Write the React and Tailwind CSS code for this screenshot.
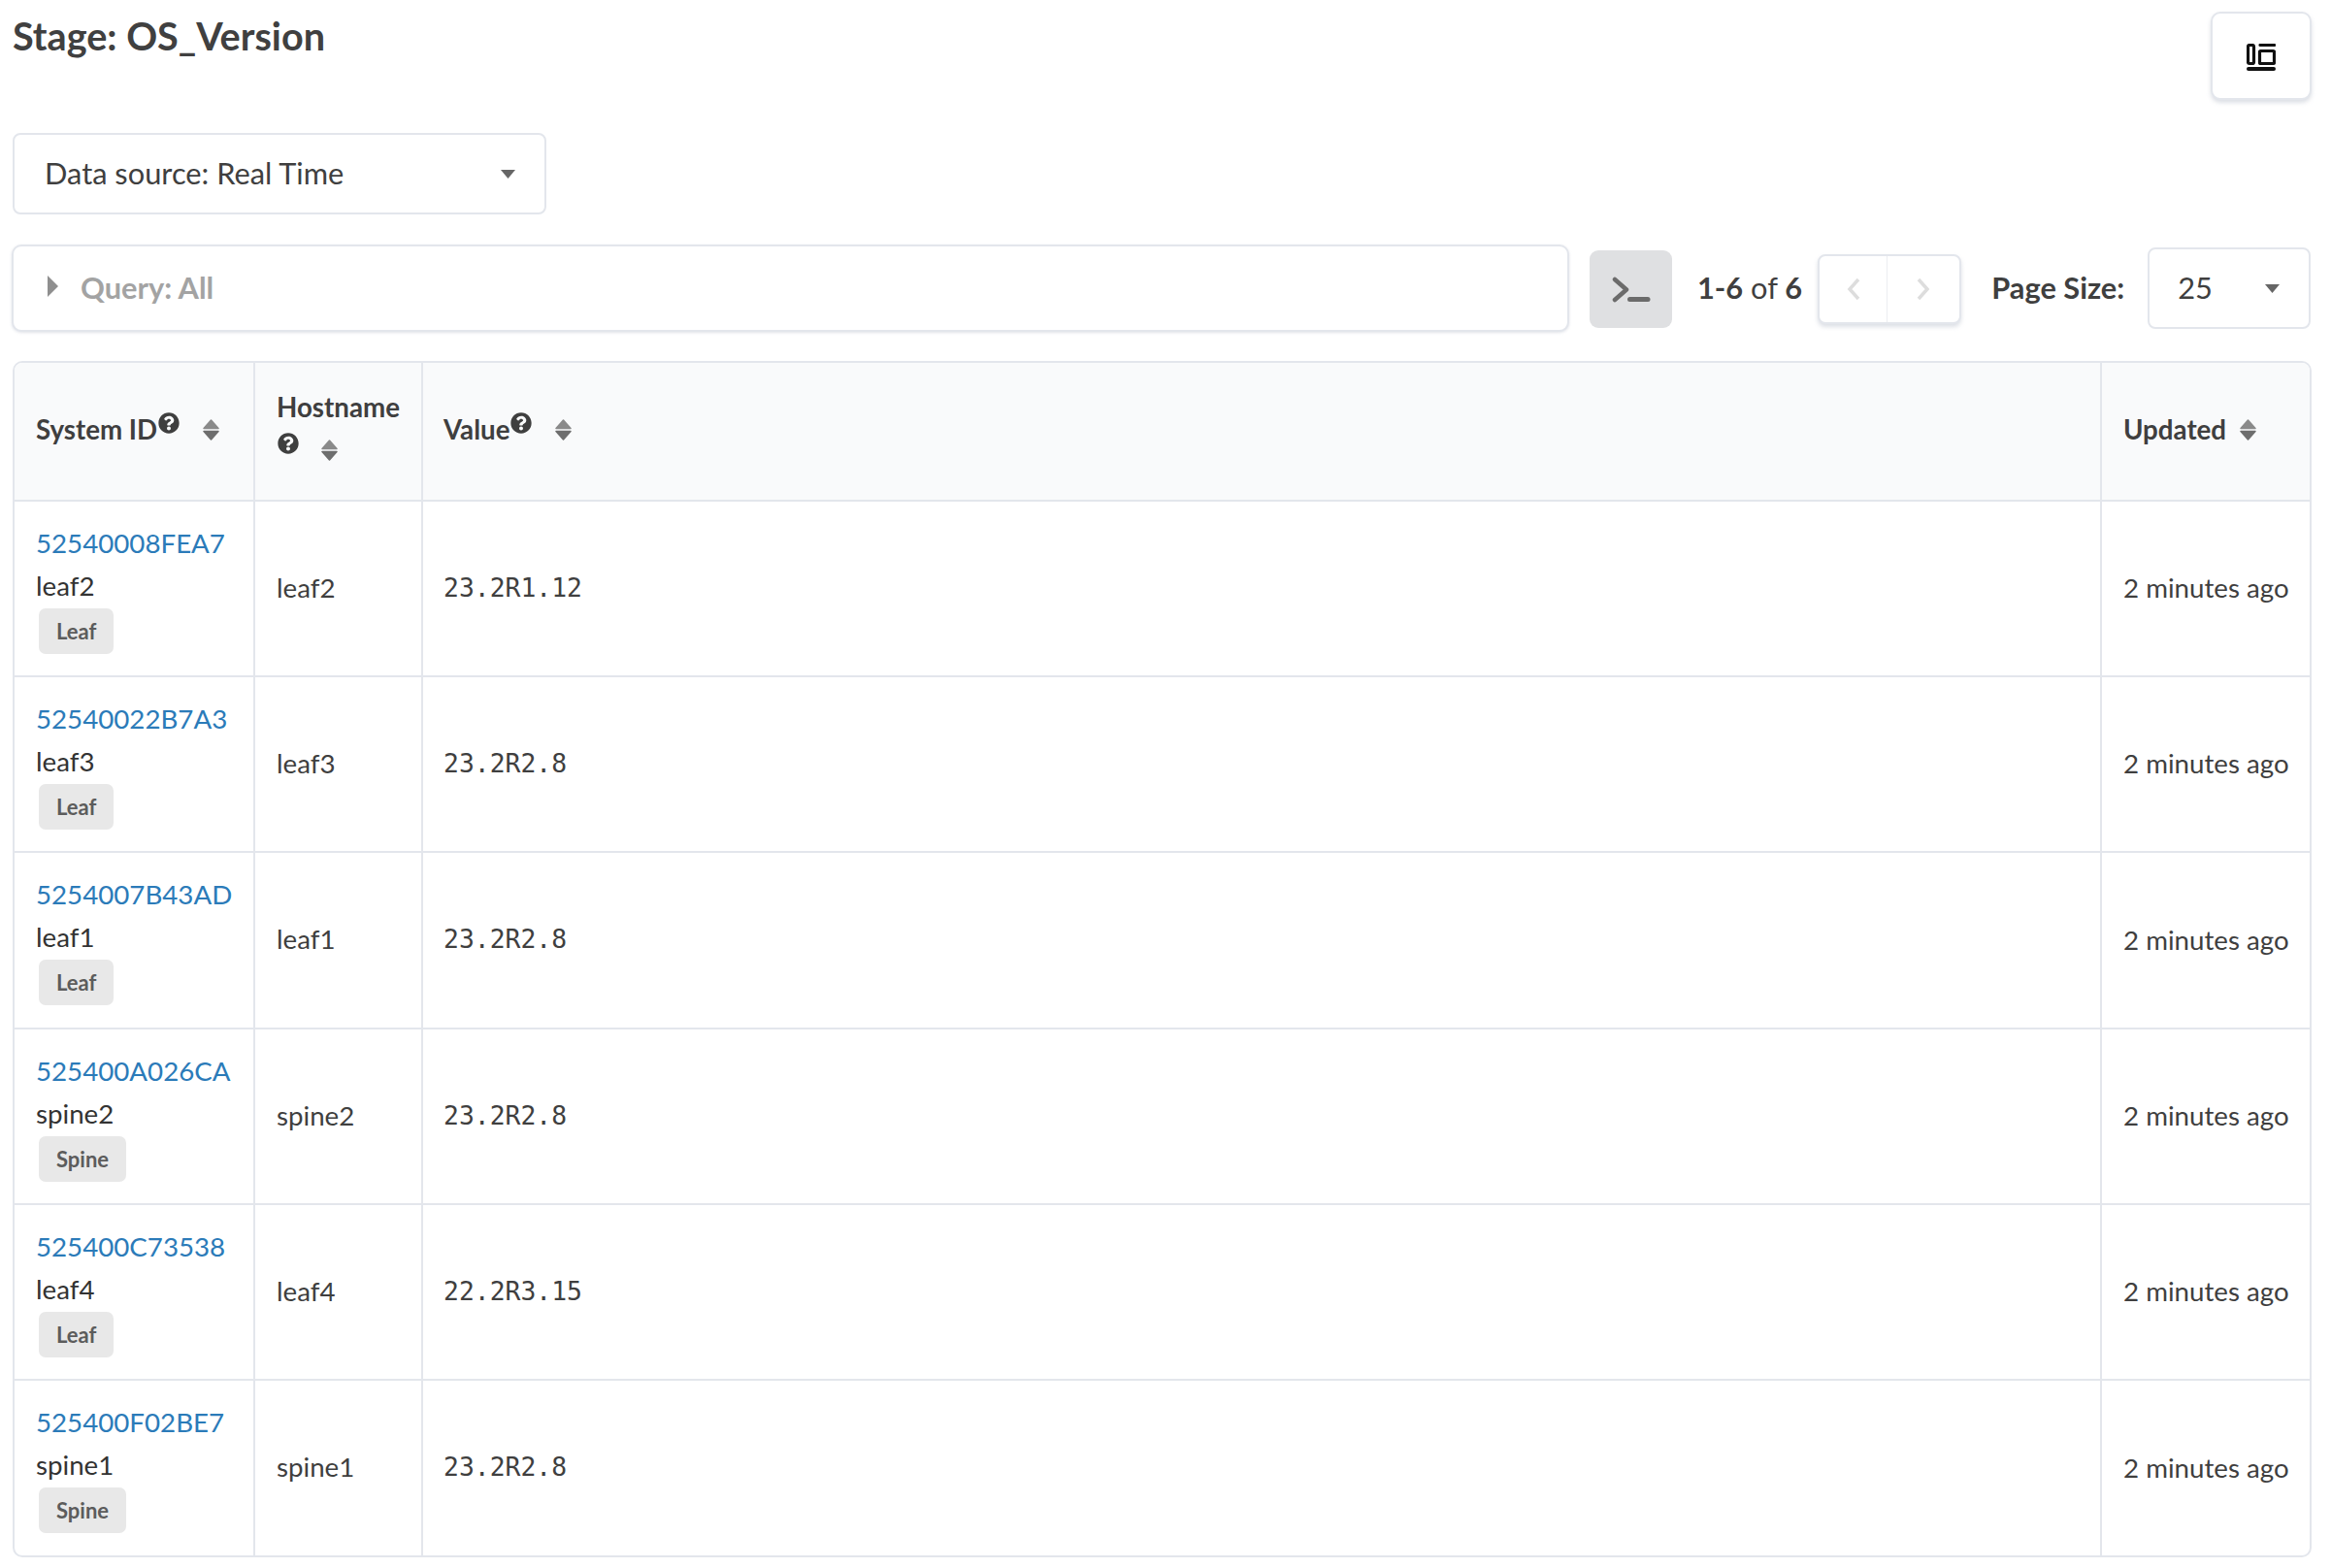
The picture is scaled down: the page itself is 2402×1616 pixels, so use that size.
import React from "react";
import { FaQuestionCircle } from "react-icons/fa";

const Sort = () => (
  <svg width="17" height="22" viewBox="0 0 17 22" className="shrink-0 block">
    <path d="M8.5 1 L16 9.5 H1 Z" fill="#8a8a8a" stroke="#8a8a8a" strokeWidth="1.5" strokeLinejoin="round" />
    <path d="M1 12.5 H16 L8.5 21 Z" fill="#6e6e6e" stroke="#6e6e6e" strokeWidth="1.5" strokeLinejoin="round" />
  </svg>
);

const Help = ({ className }) => <FaQuestionCircle className={className} size={22} color="#3f3f3f" />;

const Caret = ({ className }) => (
  <svg width="15" height="9" viewBox="0 0 15 9" className={className}>
    <path d="M0 0 H15 L7.5 9 Z" fill="#666666" />
  </svg>
);

const rows = [
  ["52540008FEA7", "leaf2", "Leaf", "23.2R1.12", "h-[181px]"],
  ["52540022B7A3", "leaf3", "Leaf", "23.2R2.8", "h-[181px]"],
  ["5254007B43AD", "leaf1", "Leaf", "23.2R2.8", "h-[182px]"],
  ["525400A026CA", "spine2", "Spine", "23.2R2.8", "h-[181px]"],
  ["525400C73538", "leaf4", "Leaf", "22.2R3.15", "h-[181px]"],
  ["525400F02BE7", "spine1", "Spine", "23.2R2.8", "h-[181px]"],
];

const box = "border-2 border-[#e3e6ec] bg-white";

export default function App() {
  return (
    <div className="w-[2402px] h-[1616px] bg-white text-[#3f3f3f] text-[30.8px] leading-[42px] pl-[12px] pr-[20px] font-['Lato','sans-serif'] overflow-hidden">
      <div className="flex justify-between items-start h-[102px] pt-[12px]">
        <h1 className="pl-[1px] -mt-[12px] pt-[12px] text-[39.6px] leading-[50px] font-bold text-[#404040]">Stage: OS_Version</h1>
        <button className={`${box} w-[104px] h-[91px] rounded-[10px] shadow-[0_3px_4px_rgba(180,186,200,0.45)] flex items-center justify-center`}>
          <svg width="30" height="28" viewBox="0 0 30 28" fill="none" stroke="#111" strokeWidth="3.2" className="mt-[3px]">
            <rect x="1.5" y="1.5" width="6" height="19" rx="1.5" />
            <path d="M14 1.5 H28.5" strokeLinecap="round" />
            <rect x="13.5" y="7.5" width="15" height="13" rx="1" />
            <path d="M2 26 H28" strokeWidth="4" strokeLinecap="round" />
          </svg>
        </button>
      </div>

      <div className={`${box} ml-[1px] mt-[35px] w-[550px] h-[84px] rounded-[8px] flex items-center justify-between pl-[31px] pr-[30px]`}>
        <span>Data source: Real Time</span>
        <Caret />
      </div>

      <div className="flex items-center mt-[31px] h-[90px]">
        <div className={`${box} w-[1605px] h-[90px] rounded-[10px] flex items-center pl-[35px] shadow-[0_1px_3px_rgba(180,186,200,0.4)] shrink-0`}>
          <svg width="11" height="22" viewBox="0 0 11 22" className="mr-[23px] -mt-[4px]"><path d="M0 0 L11 11 L0 22 Z" fill="#8f8f8f" /></svg>
          <span className="font-bold text-[#a3a3a3]">Query: All</span>
        </div>
        <button className="ml-[21px] mt-[2px] w-[85px] h-[80px] rounded-[9px] bg-[#dfe0e2] flex items-center justify-center shrink-0">
          <svg width="40" height="27" viewBox="0 0 40 27" fill="none" stroke="#6b6b6b" strokeLinecap="round" strokeLinejoin="round" className="mt-[1px]">
            <path d="M3 3 L15 13.5 L3 24" strokeWidth="4.5" />
            <path d="M18.5 23.5 H37" strokeWidth="5" />
          </svg>
        </button>
        <span className="ml-[26px] whitespace-nowrap"><b>1-6</b> of <b>6</b></span>
        <div className={`${box} ml-[16px] mt-[2px] w-[148px] h-[72px] rounded-[8px] flex shadow-[0_3px_4px_rgba(180,186,200,0.45)] shrink-0`}>
          <div className="w-[70px] flex items-center justify-center border-r border-[#eceef1]">
            <svg width="14" height="24" viewBox="0 0 14 24" fill="none" stroke="#dddddd" strokeWidth="3.5"><path d="M12 2 L3 12 L12 22" /></svg>
          </div>
          <div className="flex-1 flex items-center justify-center">
            <svg width="14" height="24" viewBox="0 0 14 24" fill="none" stroke="#dddddd" strokeWidth="3.5"><path d="M2 2 L11 12 L2 22" /></svg>
          </div>
        </div>
        <span className="ml-[31px] font-bold whitespace-nowrap">Page Size:</span>
        <div className={`${box} ml-[24px] w-[168px] h-[84px] rounded-[8px] flex items-center justify-between pl-[29px] pr-[30px] shrink-0`}>
          <span>25</span>
          <Caret />
        </div>
      </div>

      <div className="ml-[1px] mt-[30px] w-[2369px] rounded-[10px] border-2 border-[#e3e6ec] overflow-hidden text-[27.7px]">
        <table className="w-full table-fixed border-collapse">
          <colgroup>
            <col className="w-[247px]" />
            <col className="w-[173px]" />
            <col />
            <col className="w-[215px]" />
          </colgroup>
          <thead>
            <tr className="h-[142px] bg-[#f9fafb] border-b-2 border-[#e3e6ec] text-left font-bold">
              <th className="pl-[22px] pb-[3px] border-r-2 border-[#e3e6ec]">
                <div className="flex items-center">
                  <span>System ID</span>
                  <Help className="-mt-[15px] ml-[1px]" />
                  <span className="ml-[24px]"><Sort /></span>
                </div>
              </th>
              <th className="pl-[22px] pb-[3px] border-r-2 border-[#e3e6ec]">
                <div className="-mt-[3px]">Hostname</div>
                <div className="flex items-center h-[44px] -mt-[1px]">
                  <Help className="ml-[1px] -mt-[10px]" />
                  <span className="ml-[23px] mt-[3px]"><Sort /></span>
                </div>
              </th>
              <th className="pl-[21px] pb-[3px] border-r-2 border-[#e3e6ec]">
                <div className="flex items-center">
                  <span>Value</span>
                  <Help className="-mt-[15px] ml-[1px]" />
                  <span className="ml-[24px]"><Sort /></span>
                </div>
              </th>
              <th className="pl-[22px] pb-[3px]">
                <div className="flex items-center">
                  <span>Updated</span>
                  <span className="ml-[14px]"><Sort /></span>
                </div>
              </th>
            </tr>
          </thead>
          <tbody>
            {rows.map(([id, host, role, value, h], i) => (
              <tr key={id} className={`${h} ${i < rows.length - 1 ? "border-b-2 border-[#e3e6ec]" : ""}`}>
                <td className="pl-[22px] pb-[1px] border-r-2 border-[#e3e6ec]">
                  <div className="text-[#2b7bb9] leading-[44px] -mt-[1px]">{id}</div>
                  <div className="text-[#333333] leading-[44px]">{host}</div>
                  <div className="ml-[3px] mt-[1px] inline-block h-[47px] px-[18px] rounded-[7px] bg-[#e8e8e8] text-[#5c5c5c] text-[22px] leading-[47px] font-bold">{role}</div>
                </td>
                <td className="pl-[22px] pb-[2px] border-r-2 border-[#e3e6ec]">{host}</td>
                <td className="pl-[21px] pb-[2px] border-r-2 border-[#e3e6ec] font-['DejaVu_Sans_Mono','monospace'] text-[26.4px]">{value}</td>
                <td className="pl-[22px] pb-[1px] whitespace-nowrap">2 minutes ago</td>
              </tr>
            ))}
          </tbody>
        </table>
      </div>
    </div>
  );
}
